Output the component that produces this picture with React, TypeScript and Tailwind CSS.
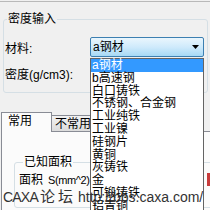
import React from "react";

const items = [
  "a钢材",
  "b高速钢",
  "白口铸铁",
  "不锈钢、合金钢",
  "工业纯铁",
  "工业镍",
  "硅钢片",
  "黄铜",
  "灰铸铁",
  "金",
  "可锻铸铁",
  "铝青铜",
];

export default function App() {
  return (
    <div className="relative w-[210px] h-[210px] overflow-hidden bg-[#f0f0f0] text-[12px] leading-[13px] text-black font-['Liberation_Sans','Noto_Sans_CJK_SC',sans-serif]">
      <div className="mt-px h-px bg-[#b9b9b9]" />
      <fieldset className="mt-[11px] ml-[3px] w-[205px] border border-[#d5dfe5] rounded-[3px] px-0 pb-[7px]">
        <legend className="ml-[3px] px-px h-[13px] leading-[13px]">密度输入</legend>
        <div className="flex items-end h-[20px] mt-[11px]">
          <div className="w-[86px] pl-[1px] pb-[1px]">材料:</div>
          <div className="w-[114px] h-[20px] border border-[#3c7fb1] rounded-[2px] bg-gradient-to-b from-[#eaf6fd] via-[#cfeafb] to-[#a7d9f5] flex items-center pl-[2px] pr-[4px]">
            <span className="flex-1">a钢材</span>
            <svg width="7" height="4" viewBox="0 0 7 4">
              <path d="M0 0H7L3.5 4Z" fill="#000" />
            </svg>
          </div>
        </div>
        <div className="flex items-center h-[20px] mt-[8px]">
          <div className="w-[86px] pl-[1px]">密度(g/cm3):</div>
          <div className="w-[114px] h-[20px] bg-white border border-[#abadb3]" />
        </div>
      </fieldset>

      <div className="mt-[19px] ml-[1px] flex items-end">
        <div className="w-[51px] h-[20px] border border-b-0 border-[#898c95] bg-[#fbfbfb] pl-[6px] pt-[2px] relative z-10 -mb-px">
          常用
        </div>
        <div className="w-[52px] h-[16px] border border-l-0 border-b-0 border-[#898c95] bg-gradient-to-b from-[#f2f2f2] to-[#dcdcdc] pl-[3px] pt-[2px]">
          不常用
        </div>
      </div>
      <div className="ml-[1px] h-[100px] border-t border-l border-[#898c95] bg-[#fbfbfb] pt-[24px]">
        <fieldset className="ml-[12px] w-[200px] border border-[#d5dfe5] rounded-[3px] px-0">
          <legend className="ml-[8px] px-px h-[13px] leading-[13px]">已知面积</legend>
          <div className="mt-[5px] pl-[4px] flex items-end">
            <span>面积</span>
            <span className="ml-[5px] text-[11px] tracking-[-0.4px]">S(mm^2)</span>
          </div>
          <div className="h-[20px]" />
        </fieldset>
      </div>

      <div className="absolute left-[207px] top-[173px] w-[3px] h-[13px] bg-[#c83c3c]" />

      <div className="absolute left-[90px] top-[58px] w-[114px] h-[160px] bg-white border border-[#646464] z-20">
        {items.map((t, i) => (
          <div
            key={t}
            className={
              i === 0
                ? "h-[12.8px] leading-[13px] pl-px bg-[#3399ff] text-white whitespace-nowrap"
                : "h-[12.8px] leading-[13px] pl-px whitespace-nowrap"
            }
          >
            {t}
          </div>
        ))}
      </div>

      <div className="absolute left-[3px] top-[189px] z-30 whitespace-nowrap text-[14px] leading-[16px] text-[#333333] flex items-end">
        <span className="tracking-[-0.8px]">CAXA</span>
        <span className="ml-[2px] tracking-[3px] text-[15px]">论坛</span>
        <span className="ml-[2px]">http://bbs.caxa.com/</span>
      </div>
    </div>
  );
}
